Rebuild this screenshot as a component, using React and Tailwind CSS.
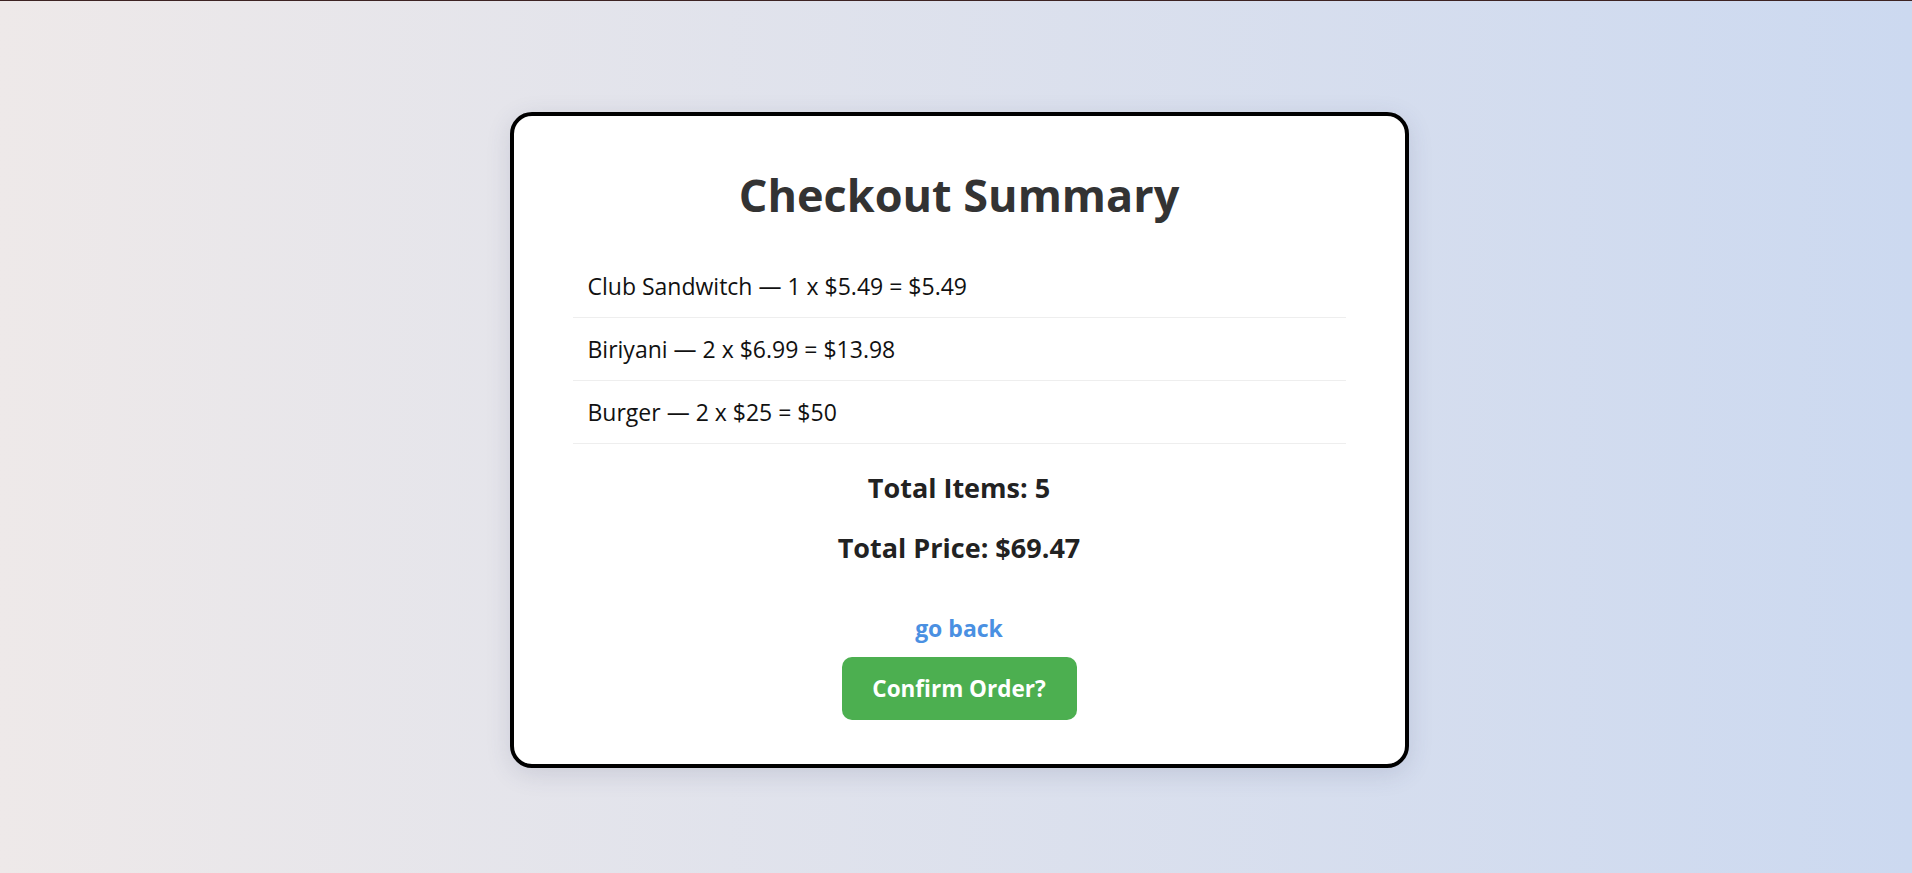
import React from 'react';

const items = [
  { name: 'Club Sandwitch', qty: 1, price: 5.49 },
  { name: 'Biriyani', qty: 2, price: 6.99 },
  { name: 'Burger', qty: 2, price: 25 },
];

const fmt = n => (Number.isInteger(n) ? `${n}` : n.toFixed(2));

const App = () => {
  const totalItems = items.reduce((s, i) => s + i.qty, 0);
  const totalPrice = items.reduce((s, i) => s + i.qty * i.price, 0);

  return (
    <div className="min-h-screen flex items-center justify-center border-t border-[#3d2323] bg-gradient-to-r from-[#eee9e9] to-[#ccd9f0] font-['Open_Sans',sans-serif]">
      <div className="mt-[6px] ml-[6px] w-[899px] bg-white border-4 border-black rounded-[22px] shadow-[0_6px_24px_rgba(60,70,110,0.15)] px-[59px] pt-[52px] pb-[44px] text-center">
        <h1 className="text-[45px] leading-[1.2] font-bold text-[#333]">Checkout Summary</h1>

        {/* Items */}
        <ul className="mt-[33px] text-left">
          {items.map(item => (
            <li key={item.name} className="px-[15px] py-[13px] border-b border-[#eee] text-[23px] leading-[36px] text-[#111]">
              {item.name} — {item.qty} x ${fmt(item.price)} = ${fmt(+(item.qty * item.price).toFixed(2))}
            </li>
          ))}
        </ul>

        <p className="mt-[28px] text-[27px] leading-[32px] font-bold text-[#222]">Total Items: {totalItems}</p>
        <p className="mt-[28px] text-[27px] leading-[32px] font-bold text-[#222]">Total Price: ${totalPrice.toFixed(2)}</p>

        <a href="#" className="block mt-[47px] text-[23px] leading-[34px] font-bold text-[#4a90e2]">go back</a>
        <button className="mt-[12px] w-[235px] h-[63px] rounded-[10px] bg-[#4caf50] text-white text-[22.5px] font-bold">
          Confirm Order?
        </button>
      </div>
    </div>
  );
};

export default App;
